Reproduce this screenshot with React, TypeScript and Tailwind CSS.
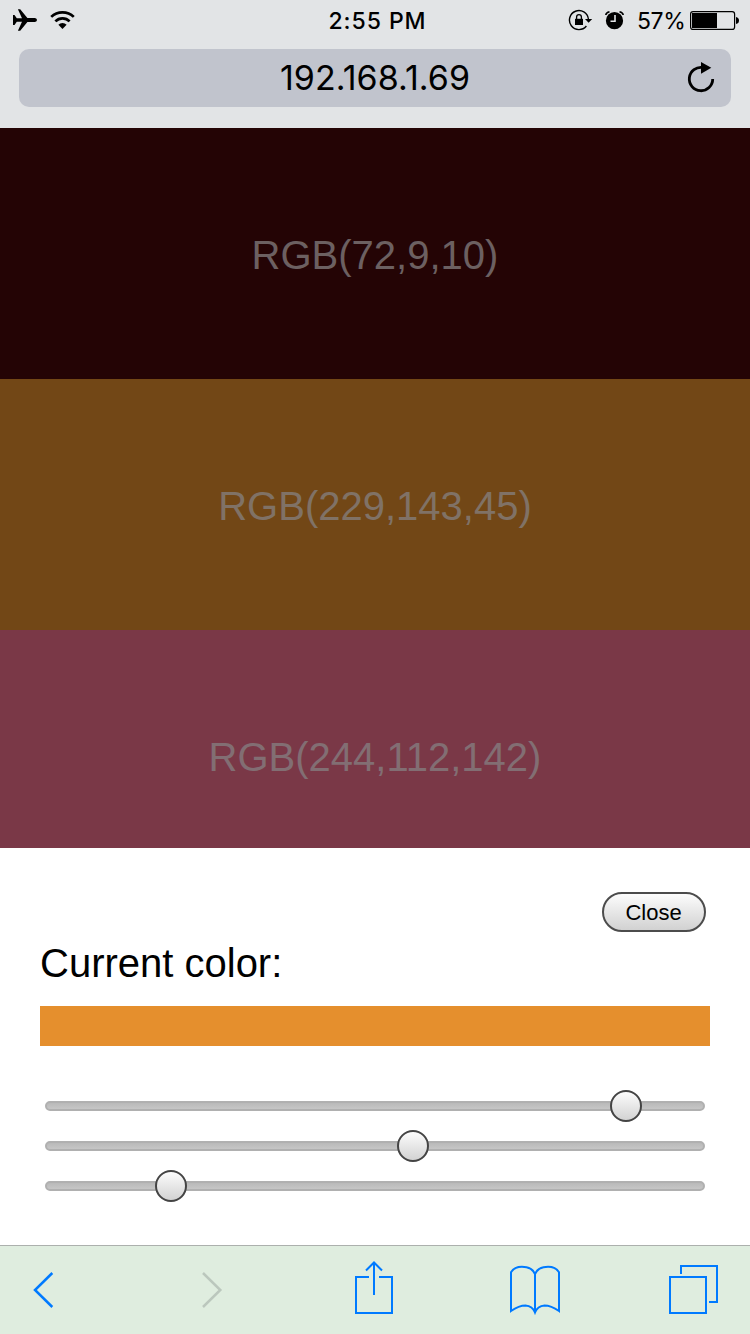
import React from 'react';

const bands = [
  { label: 'RGB(72,9,10)', style: 'h-[251px] bg-[#240405] text-[#6c6061]' },
  { label: 'RGB(229,143,45)', style: 'h-[251px] bg-[#724716] text-[#807266]' },
  { label: 'RGB(244,112,142)', style: 'h-[218px] bg-[#7a3847] text-[#826e73]' },
];

const sliders = [
  { name: 'Red', value: 229, left: 565 },
  { name: 'Green', value: 143, left: 352 },
  { name: 'Blue', value: 45, left: 110 },
];

function StatusBar() {
  return (
    <div className="flex h-10 items-start text-black">
      <svg className="h-10 w-[300px] shrink-0" viewBox="0 0 300 40">
        <path d="M13 15h1.500l2.300 3.300h5.200L17.900 9.200h2.300L27.400 18.100H35q2 .3 2 1.900t-2 1.900h-7.600L20.200 30.800h-2.300L22 21.700h-5.200L14.500 25H13z" />
        <g fill="none" stroke="#000" strokeWidth="2.700">
          <path d="M51.200 16.900a16.200 16.200 0 0 1 22.600 0" />
          <path d="M55.400 21.400a10 10 0 0 1 14.200 0" />
        </g>
        <path d="M58.400 24.800a5.800 5.800 0 0 1 8.200 0L62.500 28.900z" />
      </svg>
      <div className="flex h-10 w-[155px] items-center justify-center pt-[2px] font-['Inter'] text-[23px] font-medium tracking-[0.950px]">2:55 PM</div>
      <svg className="ml-[113px] h-10 w-[62px] shrink-0" viewBox="568 0 62 40">
        <path d="M586.400 26A9.500 9.500 0 1 1 588.400 19" fill="none" stroke="#000" strokeWidth="1.400" />
        <path d="M585 19h7.200L588.600 22.800z" />
        <path d="M575 18.800h8V25h-8z" />
        <path d="M576.600 19.500v-2.500a2.400 2.400 0 0 1 4.800 0v2.500" fill="none" stroke="#000" strokeWidth="1.300" />
        <circle cx="614.500" cy="20.700" r="8.600" />
        <path d="M605.800 15q.3-2.500 3.700-3.200M623.200 15q-.3-2.500-3.700-3.200" fill="none" stroke="#000" strokeWidth="1.600" />
        <path d="M615 15v6.300h-4.500" fill="none" stroke="#e2e4e6" strokeWidth="1.600" />
      </svg>
      <div className="flex h-10 w-[60px] items-center pl-[7px] pt-[2px] font-['Inter'] text-[23px] tracking-[-0.400px]">57%</div>
      <svg className="h-10 w-[60px] shrink-0" viewBox="690 0 60 40">
        <rect x="690.600" y="11.600" width="44" height="17.800" rx="2.500" fill="none" stroke="#000" strokeWidth="1.200" />
        <path d="M692 13h25v15h-25zM736 17q3 .5 3 3.500t-3 3.500z" />
      </svg>
    </div>
  );
}

function AddressBar() {
  return (
    <div className="mx-[19px] mt-[9px] flex h-[58px] items-center rounded-[10px] bg-[#c1c4cd]">
      <div className="w-[60px]" />
      <div className="flex-1 text-center font-['Inter'] text-[34px] leading-[58px] tracking-[0.050px]">192.168.1.69</div>
      <svg className="h-[58px] w-[60px]" viewBox="671 49 60 58">
        <path d="M703 67.500A11.700 11.700 0 1 0 712.700 79" fill="none" stroke="#000" strokeWidth="2.800" />
        <path d="M701 62l10.300 5.800L701 73.800z" />
      </svg>
    </div>
  );
}

function Slider({ name, value, left }: { name: string; value: number; left: number }) {
  return (
    <div role="slider" aria-label={name} aria-valuemin={0} aria-valuemax={255} aria-valuenow={value} className="relative flex h-10 items-center px-[5px]">
      <div className="h-[10px] w-full rounded-full border-2 border-[#b0b0b0] bg-linear-to-b from-[#b5b5b5] to-[#cacaca] bg-origin-border" />
      <div className="absolute top-1 size-8 rounded-full border-2 border-[#444] bg-linear-to-b from-white to-[#d0d0d0] bg-origin-border" style={{ left: left + 5 }} />
    </div>
  );
}

function Toolbar() {
  return (
    <nav className="flex h-[89px] items-center border-t border-[#acb0ad] bg-[#dfeddf] pl-8 text-[#007aff]">
      <svg className="h-[88px] w-6" viewBox="32 1246 24 88" fill="none" stroke="currentColor" strokeWidth="2.500">
        <path d="M52.300 1273 35 1290l17.300 17" />
      </svg>
      <svg className="ml-[144px] h-[88px] w-6" viewBox="200 1246 24 88" fill="none" stroke="#bbc7bd" strokeWidth="2.500">
        <path d="m203 1273 17.300 17-17.300 17" />
      </svg>
      <svg className="ml-[130px] h-[88px] w-10" viewBox="354 1246 40 88" fill="none" stroke="currentColor" strokeWidth="2">
        <path d="M369 1277h-13v36h36v-36h-13M374 1295v-32M366 1270.500l8-8 8 8" />
      </svg>
      <svg className="ml-[115px] h-[88px] w-[52px]" viewBox="509 1246 52 88" fill="none" stroke="currentColor" strokeWidth="2">
        <path d="M535 1312.500V1274q-2.500-5.500-8.500-6.700-11-2-15.500 5V1311q8-5.500 14.500-5.500 7 .5 9.500 7 2.500-6.500 9.500-7 6.500 0 14.500 5.500v-38.700q-4.500-7-15.500-5-6 1.200-8.500 6.700" />
      </svg>
      <svg className="ml-[107px] h-[88px] w-[51px]" viewBox="668 1246 51 88" fill="none" stroke="currentColor" strokeWidth="2">
        <path d="M670 1277h36v36h-36zM681 1274v-8h36v36h-8" />
      </svg>
    </nav>
  );
}

export default function App() {
  return (
    <div className="flex h-[1334px] w-[750px] flex-col overflow-hidden bg-white font-['Liberation_Sans',sans-serif] text-black">
      <header className="h-32 bg-[#e2e4e6]">
        <StatusBar />
        <AddressBar />
      </header>
      <main>
        {bands.map((band) => (
          <div key={band.label} className={`overflow-hidden pt-[104px] text-center text-[40px] leading-[46px] ${band.style}`}>{band.label}</div>
        ))}
      </main>
      <section className="h-[397px] px-10 pt-11">
        <div className="flex justify-end pr-1">
          <button className="flex h-10 w-[104px] items-center justify-center rounded-full border-2 border-[#4c4c4c] bg-linear-to-b from-white to-[#cfcfcf] bg-origin-border pr-px text-[22px]">Close</button>
        </div>
        <div className="mt-2 h-[46px] text-[40px] leading-[46px]">Current color:</div>
        <div className="mt-5 h-10 bg-[#e58f2d]" />
        <div className="mt-10">
          {sliders.map((slider) => (
            <Slider key={slider.name} {...slider} />
          ))}
        </div>
      </section>
      <Toolbar />
    </div>
  );
}
